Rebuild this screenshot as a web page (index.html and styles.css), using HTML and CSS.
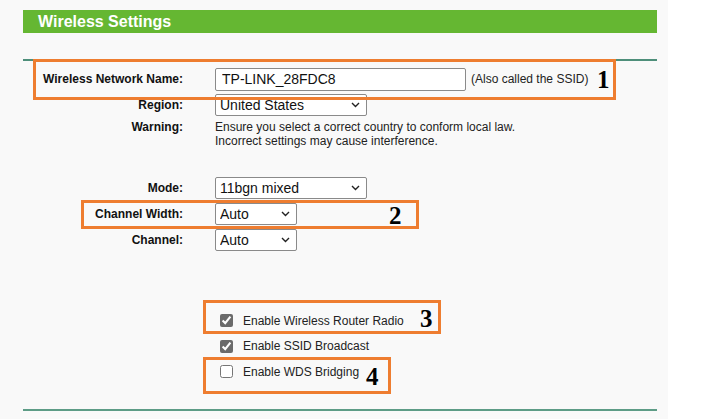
FILE: index.html
```html
<!DOCTYPE html>
<html>
<head>
<meta charset="utf-8">
<link rel="stylesheet" href="styles.css">
</head>
<body>
<div class="panel">
  <div class="content">
    <div class="title">Wireless Settings</div>
    <div class="rule"></div>
    <div class="form">
      <div class="row r-ssid">
        <div class="label">Wireless Network Name:</div>
        <div class="value">
          <input class="text" type="text" value="TP-LINK_28FDC8">
          <span class="hint">(Also called the SSID)</span>
        </div>
      </div>
      <div class="row">
        <div class="label">Region:</div>
        <div class="value">
          <span class="selwrap"><select class="sel wide"><option>United States</option></select><svg class="chev" width="9" height="6" viewBox="0 0 9 6"><path d="M1 1 L4.5 4.5 L8 1" fill="none" stroke="#222" stroke-width="1.4"/></svg></span>
        </div>
      </div>
      <div class="row warn">
        <div class="label">Warning:</div>
        <div class="value note">Ensure you select a correct country to conform local law.<br>Incorrect settings may cause interference.</div>
      </div>
      <div class="row r-mode">
        <div class="label">Mode:</div>
        <div class="value">
          <span class="selwrap"><select class="sel wide"><option>11bgn mixed</option></select><svg class="chev" width="9" height="6" viewBox="0 0 9 6"><path d="M1 1 L4.5 4.5 L8 1" fill="none" stroke="#222" stroke-width="1.4"/></svg></span>
        </div>
      </div>
      <div class="row">
        <div class="label">Channel Width:</div>
        <div class="value">
          <span class="selwrap"><select class="sel narrow"><option>Auto</option></select><svg class="chev" width="9" height="6" viewBox="0 0 9 6"><path d="M1 1 L4.5 4.5 L8 1" fill="none" stroke="#222" stroke-width="1.4"/></svg></span>
        </div>
      </div>
      <div class="row">
        <div class="label">Channel:</div>
        <div class="value">
          <span class="selwrap"><select class="sel narrow"><option>Auto</option></select><svg class="chev" width="9" height="6" viewBox="0 0 9 6"><path d="M1 1 L4.5 4.5 L8 1" fill="none" stroke="#222" stroke-width="1.4"/></svg></span>
        </div>
      </div>
      <div class="checks">
        <label class="chk"><input type="checkbox" checked><span>Enable Wireless Router Radio</span></label>
        <label class="chk"><input type="checkbox" checked><span>Enable SSID Broadcast</span></label>
        <label class="chk"><input type="checkbox"><span>Enable WDS Bridging</span></label>
      </div>
    </div>
    <div class="rule bottom"></div>

    <div class="mark m1"><span class="num">1</span></div>
    <div class="mark m2"><span class="num">2</span></div>
    <div class="mark m3"><span class="num">3</span></div>
    <div class="mark m4"><span class="num">4</span></div>
  </div>
</div>
</body>
</html>
```

FILE: styles.css
```css
html, body {
  margin: 0;
  padding: 0;
  background: #ffffff;
}
body {
  font-family: "Liberation Sans", Arial, sans-serif;
  color: #1a1a1a;
  width: 712px;
  height: 419px;
  overflow: hidden;
}
.panel {
  width: 668px;
  height: 419px;
  background: #f9f9f9;
  box-sizing: border-box;
  padding-top: 10px;
}
.content {
  position: relative;
  margin-left: 23px;
  width: 634px;
}
.title {
  height: 23px;
  background: #65b732;
  color: #ffffff;
  font-weight: bold;
  font-size: 16px;
  line-height: 23px;
  padding-left: 15px;
}
.rule {
  margin-top: 26px;
  height: 2px;
  background: #4e8f7a;
}
.rule.bottom {
  margin-top: 24px;
  background: #5d9c86;
}
.form {
  padding-top: 5px;
}
.row {
  display: flex;
  align-items: center;
  height: 26px;
}
.label {
  width: 160px;
  text-align: right;
  font-weight: bold;
  font-size: 12px;
  color: #111;
}
.value {
  margin-left: 32px;
  display: flex;
  align-items: center;
  font-size: 12px;
}
.text {
  width: 251px;
  height: 23px;
  box-sizing: border-box;
  border: 1px solid #8a8a8a;
  border-radius: 2px;
  padding: 0 6px;
  font-family: "Liberation Sans", Arial, sans-serif;
  font-size: 14px;
  color: #111;
  background: #fff;
  margin: 0;
}
.hint {
  margin-left: 5px;
  font-size: 12px;
  color: #222;
}
.selwrap {
  position: relative;
  display: inline-flex;
}
.sel {
  -webkit-appearance: none;
  appearance: none;
  height: 22px;
  box-sizing: border-box;
  font-family: "Liberation Sans", Arial, sans-serif;
  font-size: 14px;
  color: #111;
  background: #fff;
  border: 1px solid #8a8a8a;
  border-radius: 2px;
  margin: 0;
  padding: 0 4px;
}
.chev {
  position: absolute;
  right: 7px;
  top: 8px;
  pointer-events: none;
}
.wide { width: 152px; }
.narrow { width: 82px; }
.row.warn {
  height: auto;
  align-items: flex-start;
  margin-top: 2px;
}
.warn .label { line-height: 14px; }
.note {
  display: block;
  line-height: 14px;
  color: #222;
}
.row.r-mode {
  margin-top: 27px;
}
.checks {
  padding-top: 55px;
  padding-left: 197px;
  display: flex;
  flex-direction: column;
}
.chk {
  display: flex;
  align-items: center;
  height: 25.5px;
  font-size: 12px;
  color: #222;
}
.chk input {
  margin: 0 10px 0 0;
  width: 13px;
  height: 13px;
  accent-color: #6b6b6b;
}
.mark {
  position: absolute;
  border: 3px solid #ee7d30;
  box-sizing: border-box;
}
.num {
  position: absolute;
  font-family: "Liberation Serif", "Times New Roman", serif;
  font-weight: bold;
  font-size: 25px;
  color: #000;
  line-height: 1;
}
.m1 { left: 10px; top: 49px; width: 583px; height: 41px; }
.m1 .num { left: 561px; top: 5px; }
.m2 { left: 58px; top: 190px; width: 338px; height: 29px; }
.m2 .num { left: 305px; top: 0px; }
.m3 { left: 180px; top: 290px; width: 238px; height: 34px; }
.m3 .num { left: 214px; top: 3px; }
.m4 { left: 180px; top: 347px; width: 188px; height: 37px; }
.m4 .num { left: 160px; top: 4px; }
```
